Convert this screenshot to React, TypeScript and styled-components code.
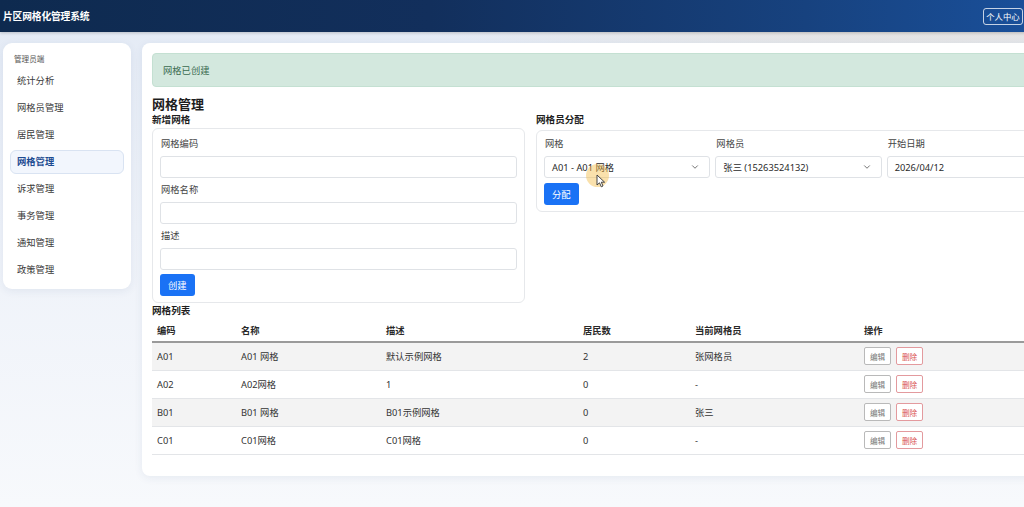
import React from "react";
import styled, { createGlobalStyle } from "styled-components";
import { ChevronDown } from "lucide-react";

const GlobalStyle = createGlobalStyle`
  html, body { margin: 0; padding: 0; }
  body {
    overflow: hidden;
    font-family: "Noto Sans", "Noto Sans CJK SC", sans-serif;
    font-size: 9.3px;
    color: #212529;
    background: #f3f6fb;
  }
  * { box-sizing: border-box; }
`;

const Page = styled.div`
  position: relative;
  width: 1074px;
  min-height: 507px;
  background:
    radial-gradient(ellipse 600px 60px at 85% 0%, rgba(228, 214, 196, 0.9), rgba(228, 214, 196, 0) 100%),
    linear-gradient(180deg, #e3eaf5 0%, #eef2f9 45%, #f7f9fc 100%);
`;

const Header = styled.header`
  height: 32px;
  display: flex;
  align-items: center;
  justify-content: space-between;
  padding: 0 51px 0 3px;
  background: linear-gradient(90deg, #0e2a4f 0%, #122f5c 40%, #17427f 75%, #1a529f 100%);
  box-shadow: 0 1px 3px rgba(0, 0, 0, 0.2);
`;

const Brand = styled.div`
  color: #ffffff;
  font-weight: 700;
  font-size: 9.8px;
  letter-spacing: -0.2px;
  font-family: "Noto Sans CJK SC", sans-serif;
`;

const HeaderButton = styled.button`
  height: 17px;
  width: 40px;
  padding: 0 2px;
  border: 1px solid rgba(255, 255, 255, 0.75);
  border-radius: 3px;
  background: transparent;
  color: #ffffff;
  font-family: "Noto Sans CJK SC", sans-serif;
  font-size: 8.4px;
  white-space: nowrap;
`;

const Body = styled.div`
  display: flex;
  align-items: flex-start;
  gap: 11px;
  padding: 11px 3px 0 3px;
`;

const Sidebar = styled.nav`
  width: 128px;
  height: 246px;
  flex-shrink: 0;
  background: #ffffff;
  border-radius: 9px;
  box-shadow: 0 2px 8px rgba(40, 70, 120, 0.08);
  padding: 11px 7px 10px 7px;
  display: flex;
  flex-direction: column;
  gap: 3px;
`;

const SideLabel = styled.div`
  font-size: 7.6px;
  color: #555;
  padding-left: 4px;
  height: 10px;
  line-height: 10px;
  margin-bottom: 2px;
`;

const SideItem = styled.div<{ $active?: boolean }>`
  height: 24px;
  line-height: 22px;
  padding-left: 6px;
  border-radius: 6px;
  font-size: 9.3px;
  color: ${(p) => (p.$active ? "#1d4b91" : "#3a3a3a")};
  font-weight: ${(p) => (p.$active ? 700 : 400)};
  background: ${(p) => (p.$active ? "#f2f6fd" : "transparent")};
  border: 1px solid ${(p) => (p.$active ? "#d9e3f2" : "transparent")};
`;

const Main = styled.main`
  flex: 1;
  height: 433px;
  background: #ffffff;
  border-radius: 8px;
  box-shadow: 0 2px 8px rgba(40, 70, 120, 0.08);
  padding: 10px;
`;

const Alert = styled.div`
  height: 34px;
  display: flex;
  align-items: center;
  padding: 0 10px;
  background: #d3e8de;
  border: 1px solid #c4e0d2;
  border-radius: 4px;
  color: #3a6b50;
  font-size: 9.3px;
`;

const PageTitle = styled.h1`
  margin: 9px 0 0 0;
  font-size: 13px;
  line-height: 17px;
  font-weight: 700;
  color: #1d1d1d;
`;

const Columns = styled.div`
  display: flex;
  gap: 11px;
  align-items: flex-start;
`;

const Column = styled.section<{ $w?: number }>`
  ${(p) => (p.$w ? `width: ${p.$w}px; flex-shrink: 0;` : "flex: 1;")}
`;

const SectionTitle = styled.h2<{ $mb?: number; $mt?: number }>`
  margin: ${(p) => p.$mt ?? 0}px 0 ${(p) => p.$mb ?? 2}px 0;
  font-size: 9.6px;
  line-height: 13px;
  font-weight: 700;
  color: #1d1d1d;
`;

const Card = styled.div<{ $pt: number }>`
  border: 1px solid #e6e8eb;
  border-radius: 6px;
  padding: ${(p) => p.$pt}px 7px 6px 7px;
`;

const FieldLabel = styled.label`
  display: block;
  font-size: 9.3px;
  line-height: 12px;
  color: #444;
  margin: 0 0 6px 1px;
`;

const Field = styled.div`
  margin-bottom: 6px;
`;

const TextInput = styled.input`
  display: block;
  width: 100%;
  height: 22px;
  border: 1px solid #dfe2e6;
  border-radius: 3px;
  background: #fff;
  font-size: 9.3px;
  padding: 0 7px;
  outline: none;
`;

const PrimaryButton = styled.button<{ $mt?: number }>`
  display: block;
  height: 22px;
  padding: 0 8px;
  border: none;
  border-radius: 3px;
  background: #1a72f5;
  color: #ffffff;
  font-family: "Noto Sans CJK SC", sans-serif;
  font-size: 9.3px;
  margin-top: ${(p) => p.$mt ?? 0}px;
`;

const AssignGrid = styled.div`
  display: grid;
  grid-template-columns: repeat(3, 1fr);
  gap: 5px;
  margin-bottom: 5px;
`;

const SelectBox = styled.div`
  height: 22px;
  display: flex;
  align-items: center;
  justify-content: space-between;
  padding: 0 9px 0 7px;
  border: 1px solid #dfe2e6;
  border-radius: 3px;
  font-size: 9.3px;
  color: #2a2a2a;
`;

const Table = styled.table`
  width: 100%;
  border-collapse: collapse;
  table-layout: fixed;
`;

const Col = styled.col<{ $w: number }>`
  width: ${(p) => p.$w}px;
`;

const Th = styled.th`
  text-align: left;
  font-weight: 700;
  font-size: 9.3px;
  color: #2a2a2a;
  height: 25px;
  padding: 1px 5px 0 5px;
  border-bottom: 2px solid #9a9a9a;
`;

const Tr = styled.tr<{ $striped?: boolean }>`
  background: ${(p) => (p.$striped ? "#f3f3f3" : "#ffffff")};
`;

const Td = styled.td`
  height: 28px;
  padding: 0 5px;
  font-size: 9.3px;
  color: #333;
  border-bottom: 1px solid #e3e5e8;
  white-space: nowrap;
`;

const Actions = styled.div`
  display: flex;
  gap: 5px;
`;

const SmallButton = styled.button<{ $danger?: boolean }>`
  height: 18px;
  width: 27px;
  padding: 0;
  border-radius: 2px;
  background: #fff;
  font-family: "Noto Sans CJK SC", sans-serif;
  font-size: 7.6px;
  border: 1px solid ${(p) => (p.$danger ? "#e39a9e" : "#b9b9b9")};
  color: ${(p) => (p.$danger ? "#d9534f" : "#777")};
`;

const CursorHalo = styled.div`
  position: absolute;
  left: 586px;
  top: 164px;
  width: 23px;
  height: 23px;
  border-radius: 50%;
  background: rgba(244, 188, 70, 0.45);
  pointer-events: none;
`;

const CursorIcon = styled.svg`
  position: absolute;
  left: 596px;
  top: 174px;
  pointer-events: none;
`;

const menu = ["统计分析", "网格员管理", "居民管理", "网格管理", "诉求管理", "事务管理", "通知管理", "政策管理"];

const rows = [
  { code: "A01", name: "A01 网格", desc: "默认示例网格", count: "2", worker: "张网格员" },
  { code: "A02", name: "A02网格", desc: "1", count: "0", worker: "-" },
  { code: "B01", name: "B01 网格", desc: "B01示例网格", count: "0", worker: "张三" },
  { code: "C01", name: "C01网格", desc: "C01网格", count: "0", worker: "-" },
];

export default function App() {
  return (
    <Page>
      <GlobalStyle />
      <Header>
        <Brand>片区网格化管理系统</Brand>
        <HeaderButton>个人中心</HeaderButton>
      </Header>
      <Body>
        <Sidebar>
          <SideLabel>管理员端</SideLabel>
          {menu.map((m) => (
            <SideItem key={m} $active={m === "网格管理"}>
              {m}
            </SideItem>
          ))}
        </Sidebar>
        <Main>
          <Alert>网格已创建</Alert>
          <PageTitle>网格管理</PageTitle>
          <Columns>
            <Column $w={373}>
              <SectionTitle>新增网格</SectionTitle>
              <Card $pt={9}>
                <Field>
                  <FieldLabel>网格编码</FieldLabel>
                  <TextInput />
                </Field>
                <Field>
                  <FieldLabel>网格名称</FieldLabel>
                  <TextInput />
                </Field>
                <Field>
                  <FieldLabel>描述</FieldLabel>
                  <TextInput />
                </Field>
                <PrimaryButton $mt={-2}>创建</PrimaryButton>
              </Card>
            </Column>
            <Column>
              <SectionTitle $mb={4}>网格员分配</SectionTitle>
              <Card $pt={7}>
                <AssignGrid>
                  <div>
                    <FieldLabel>网格</FieldLabel>
                    <SelectBox>
                      <span>A01 - A01 网格</span>
                      <ChevronDown size={10} strokeWidth={1.8} color="#444" />
                    </SelectBox>
                  </div>
                  <div>
                    <FieldLabel>网格员</FieldLabel>
                    <SelectBox>
                      <span>张三 (15263524132)</span>
                      <ChevronDown size={10} strokeWidth={1.8} color="#444" />
                    </SelectBox>
                  </div>
                  <div>
                    <FieldLabel>开始日期</FieldLabel>
                    <SelectBox>
                      <span>2026/04/12</span>
                    </SelectBox>
                  </div>
                </AssignGrid>
                <PrimaryButton>分配</PrimaryButton>
              </Card>
            </Column>
          </Columns>
          <SectionTitle $mb={0} $mt={1}>网格列表</SectionTitle>
          <Table>
            <colgroup>
              <Col $w={84} />
              <Col $w={145} />
              <Col $w={197} />
              <Col $w={112} />
              <Col $w={169} />
              <Col $w={202} />
            </colgroup>
            <thead>
              <tr>
                <Th>编码</Th>
                <Th>名称</Th>
                <Th>描述</Th>
                <Th>居民数</Th>
                <Th>当前网格员</Th>
                <Th>操作</Th>
              </tr>
            </thead>
            <tbody>
              {rows.map((r, i) => (
                <Tr key={r.code} $striped={i % 2 === 0}>
                  <Td>{r.code}</Td>
                  <Td>{r.name}</Td>
                  <Td>{r.desc}</Td>
                  <Td>{r.count}</Td>
                  <Td>{r.worker}</Td>
                  <Td>
                    <Actions>
                      <SmallButton>编辑</SmallButton>
                      <SmallButton $danger>删除</SmallButton>
                    </Actions>
                  </Td>
                </Tr>
              ))}
            </tbody>
          </Table>
        </Main>
      </Body>
      <CursorHalo />
      <CursorIcon width="10" height="14" viewBox="0 0 10 14">
        <path d="M1 1 L1 11 L3.5 8.8 L5.3 12.8 L7 12 L5.3 8.2 L8.6 8.2 Z" fill="#ffffff" stroke="#333" strokeWidth="0.9" strokeLinejoin="round" />
      </CursorIcon>
    </Page>
  );
}
